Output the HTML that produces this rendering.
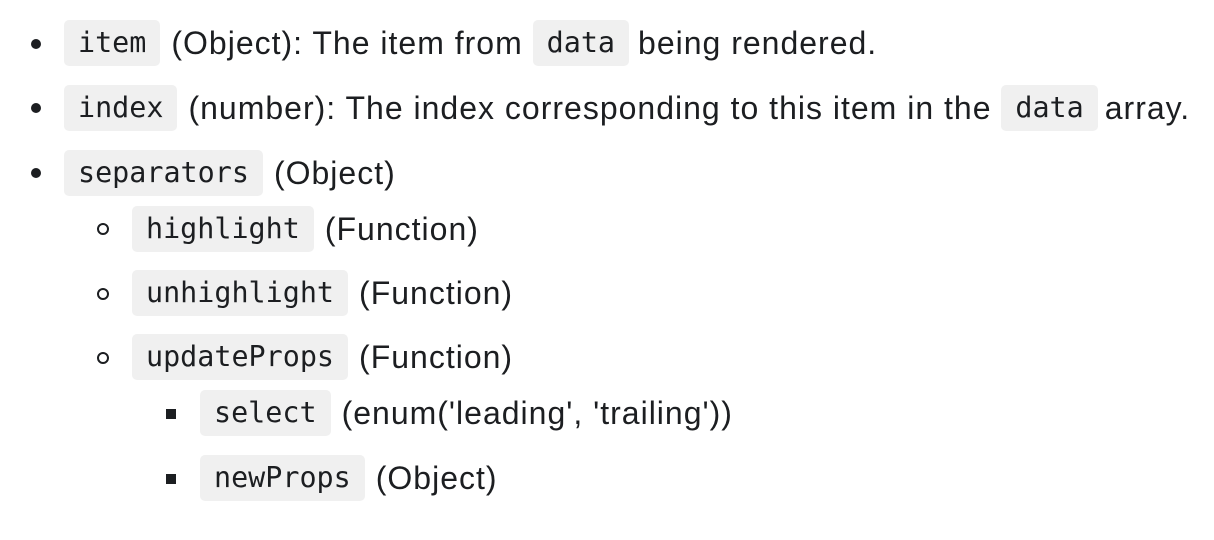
<!DOCTYPE html>
<html><head><meta charset="utf-8"><style>
html,body{margin:0;padding:0;background:#fff;width:1214px;height:540px;overflow:hidden}
.l{position:absolute;height:46px;display:flex;align-items:center;white-space:nowrap;font-family:"Liberation Sans",sans-serif;font-size:32px;letter-spacing:1px;color:#1c1e21}
code{font-family:"DejaVu Sans Mono","Liberation Mono",monospace;font-size:28.4px;letter-spacing:0;background:#f0f0f0;border-radius:5px;padding:0 14px;height:46px;line-height:46px;display:inline-block;margin-right:11px}
.b{position:absolute}
.d{width:10px;height:10px;border-radius:50%;background:#1c1e21}
.c{width:8px;height:8px;border-radius:50%;border:2px solid #1c1e21}
.s{width:10px;height:10px;background:#1c1e21}
</style></head><body>
<div class="b d" style="left:31px;top:39px"></div>
<div class="l" style="left:64px;top:20px"><code>item</code>(Object): The item from&nbsp;<code style="margin-left:0;margin-right:9px">data</code>being rendered.</div>
<div class="b d" style="left:31px;top:103px"></div>
<div class="l" style="left:64px;top:85px"><code>index</code>(number): The index corresponding to this item in the&nbsp;<code style="margin-left:0;margin-right:7px">data</code>array.</div>
<div class="b d" style="left:31px;top:168px"></div>
<div class="l" style="left:64px;top:150px"><code>separators</code>(Object)</div>
<div class="b c" style="left:97px;top:223px"></div>
<div class="l" style="left:132px;top:206px"><code>highlight</code>(Function)</div>
<div class="b c" style="left:97px;top:288px"></div>
<div class="l" style="left:132px;top:270px"><code>unhighlight</code>(Function)</div>
<div class="b c" style="left:97px;top:352px"></div>
<div class="l" style="left:132px;top:334px"><code>updateProps</code>(Function)</div>
<div class="b s" style="left:166px;top:409px"></div>
<div class="l" style="left:200px;top:390px"><code>select</code>(enum('leading', 'trailing'))</div>
<div class="b s" style="left:166px;top:474px"></div>
<div class="l" style="left:200px;top:455px"><code>newProps</code>(Object)</div>
</body></html>
